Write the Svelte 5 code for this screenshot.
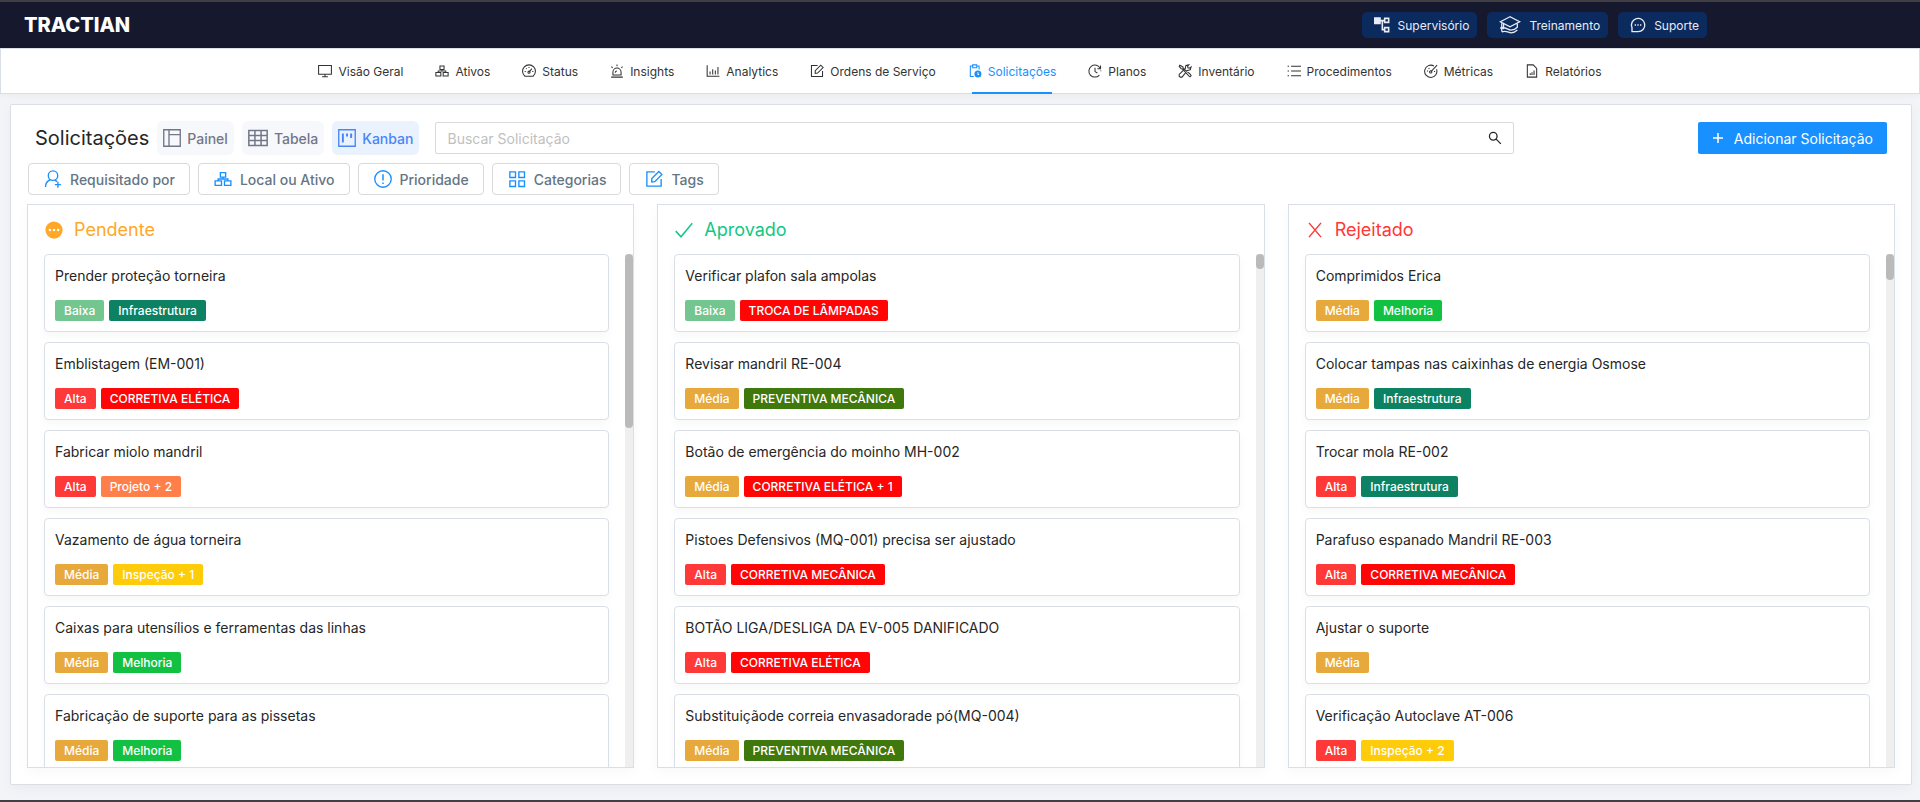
<script>
  const shortcuts = [
    { icon: 'tree', label: 'Supervisório', size: 16, stroke: 2.4 },
    { icon: 'school', label: 'Treinamento', size: 22, stroke: 1.4 },
    { icon: 'chat', label: 'Suporte', size: 16, stroke: 2 },
  ];

  const menu = [
    { icon: 'monitor', label: 'Visão Geral' },
    { icon: 'assets', label: 'Ativos' },
    { icon: 'gauge', label: 'Status' },
    { icon: 'siren', label: 'Insights' },
    { icon: 'chart', label: 'Analytics' },
    { icon: 'edit', label: 'Ordens de Serviço' },
    { icon: 'clipboard', label: 'Solicitações' },
    { icon: 'history', label: 'Planos' },
    { icon: 'tools', label: 'Inventário' },
    { icon: 'list', label: 'Procedimentos' },
    { icon: 'metrics', label: 'Métricas' },
    { icon: 'report', label: 'Relatórios' },
  ];

  const views = [
    { icon: 'panel', label: 'Painel', size: 18 },
    { icon: 'table', label: 'Tabela', size: 20 },
    { icon: 'kanban', label: 'Kanban', size: 18 },
  ];

  const filters = [
    { icon: 'userAdd', label: 'Requisitado por' },
    { icon: 'assets', label: 'Local ou Ativo' },
    { icon: 'alert', label: 'Prioridade' },
    { icon: 'grid', label: 'Categorias' },
    { icon: 'edit', label: 'Tags' },
  ];

  const tagColors = {
    'Baixa': '#73c68f',
    'Média': '#e8a93c',
    'Alta': '#ff3838',
    'Infraestrutura': '#0d8262',
    'Melhoria': '#13c142',
    'CORRETIVA ELÉTICA': '#ff0505',
    'CORRETIVA ELÉTICA + 1': '#ff0505',
    'CORRETIVA MECÂNICA': '#ff0505',
    'TROCA DE LÂMPADAS': '#ff0505',
    'PREVENTIVA MECÂNICA': '#3f780c',
    'Projeto + 2': '#ff7f4a',
    'Inspeção + 1': '#ffcc0a',
    'Inspeção + 2': '#ffcc0a',
  };

  const columns = [
    {
      title: 'Pendente',
      icon: 'pending',
      color: '#ffa726',
      thumb: 34,
      cards: [
        { title: 'Prender proteção torneira', tags: ['Baixa', 'Infraestrutura'] },
        { title: 'Emblistagem (EM-001)', tags: ['Alta', 'CORRETIVA ELÉTICA'] },
        { title: 'Fabricar miolo mandril', tags: ['Alta', 'Projeto + 2'] },
        { title: 'Vazamento de água torneira', tags: ['Média', 'Inspeção + 1'] },
        { title: 'Caixas para utensílios e ferramentas das linhas', tags: ['Média', 'Melhoria'] },
        { title: 'Fabricação de suporte para as pissetas', tags: ['Média', 'Melhoria'] },
      ],
    },
    {
      title: 'Aprovado',
      icon: 'check',
      color: '#0fc885',
      thumb: 3,
      cards: [
        { title: 'Verificar plafon sala ampolas', tags: ['Baixa', 'TROCA DE LÂMPADAS'] },
        { title: 'Revisar mandril RE-004', tags: ['Média', 'PREVENTIVA MECÂNICA'] },
        { title: 'Botão de emergência do moinho MH-002', tags: ['Média', 'CORRETIVA ELÉTICA + 1'] },
        { title: 'Pistoes Defensivos (MQ-001) precisa ser ajustado', tags: ['Alta', 'CORRETIVA MECÂNICA'] },
        { title: 'BOTÃO LIGA/DESLIGA DA EV-005 DANIFICADO', tags: ['Alta', 'CORRETIVA ELÉTICA'] },
        { title: 'Substituiçãode correia envasadorade pó(MQ-004)', tags: ['Média', 'PREVENTIVA MECÂNICA'] },
      ],
    },
    {
      title: 'Rejeitado',
      icon: 'close',
      color: '#ff3838',
      thumb: 5,
      cards: [
        { title: 'Comprimidos Erica', tags: ['Média', 'Melhoria'] },
        { title: 'Colocar tampas nas caixinhas de energia Osmose', tags: ['Média', 'Infraestrutura'] },
        { title: 'Trocar mola RE-002', tags: ['Alta', 'Infraestrutura'] },
        { title: 'Parafuso espanado Mandril RE-003', tags: ['Alta', 'CORRETIVA MECÂNICA'] },
        { title: 'Ajustar o suporte', tags: ['Média'] },
        { title: 'Verificação Autoclave AT-006', tags: ['Alta', 'Inspeção + 2'] },
      ],
    },
  ];

  // all on a 24x24 grid
  const icons = {
    tree: '<path d="M1 1.500h8v8H1z" fill="currentColor"/><path d="M16 2h6v6h-6zM16 16h6v6h-6zM9 5.500h7M12.500 5.500V19H16"/>',
    school: '<path d="M12 3 1.500 8.500 12 14l10.500-5.500zM5 11v4c3 0 5 2.500 8 2.500 2 0 5-1 7-3v-4M3 19.500c4-2 7 .5 10 1 3 0 5-1 7-3M3 10v9M1.500 16l1.500-2 2 2.500"/>',
    chat: '<path d="M3 22h9a10 10 0 1 0-9-6z"/><path d="M7 12h2M11 12h2M15 12h2" stroke-width="2.400"/>',
    monitor: '<path d="M1 2.500h22v15H1zM12 17.500V22M7 22h10"/>',
    assets: '<path d="M8.500 3.500h7v6h-7zM1.500 14.500H10v6H1.500zM14 14.500h8.500v6H14zM12 9.500V12M5.500 14.500V12h13v2.500"/>',
    gauge: '<path d="M5 21a11 11 0 1 1 14 0zM12 14l5-6"/><circle cx="12" cy="14" r="1.800"/><path d="M4.500 13h2M7 7.500l1 1M12 5v2M17.500 13h2"/>',
    siren: '<path d="M2 22.500h20M5 19v-5a7 7 0 0 1 14 0v5zM9 15a3 3 0 0 1 3-3M12 1v3M2.500 4.500l2 2M21.500 4.500l-2 2"/>',
    chart: '<path d="M2 2v19h21M7 18v-5M11.500 18V9M16 18v-7M20.500 18V5"/>',
    edit: '<path d="M13 2.500H2.500v19h19V12M9 16v-4.500l9.500-9.500 4 4L13 15.500z"/>',
    clipboard: '<path d="M10 21.500H4v-18h4M15 3.500h4v6M8 1.500h7v5H8z"/><circle cx="17" cy="17" r="6" fill="currentColor" stroke="none"/><path d="M17 14v3.500l2 1" stroke="#fff"/>',
    history: '<path d="M19.500 19a10.300 10.300 0 1 1 1.500-11.500M21.500 2.500V8h-5.500M12 6.500V13l4 2.500M22 11v1.500"/>',
    tools: '<path d="M3 2 2 4l3.500 4 2 .5L18 20l2.500 2 2-2-2-3L9 7.500 8.500 5zM16 11l5-1 1.500-5-3 2-2.500-.5-.5-2.500 2-2.500-5 1-1 5L2 18v3l2 1.500h3z"/>',
    list: '<path d="M7 4h17M7 12h17M7 20h17M1 4h2.500M1 12h2.500M1 20h2.500"/>',
    metrics: '<path d="M17 3.500A10.500 10.500 0 1 0 21.500 9M22.500 2 12 13M5 12h2M8 7l1 1.500M17 13h2"/><circle cx="11.500" cy="13.500" r="2"/>',
    report: '<path d="M4 1.500h10l6 6v15H4zM9 19v-3M12 19v-5M15.500 19v-8"/>',
    panel: '<path d="M1 1h22v22H1zM8 1v22M8 7.500h15"/>',
    table: '<path d="M1 3h22v18H1zM1 9h22M1 15h22M8.300 3v18M15.700 3v18"/>',
    kanban: '<path d="M1 1h22v22H1z"/><path d="M6.500 6v12M12 6v4M17.500 6v6" stroke-width="2.600"/>',
    search: '<circle cx="9" cy="9" r="6.500"/><path d="m14 14 8 8"/>',
    plus: '<path d="M12 2v20M2 12h20"/>',
    userAdd: '<circle cx="12" cy="7.500" r="6.300"/><path d="M2 22.500c0-5 2.500-8 6.500-9.500M14.500 13.500l3 2M18.500 15.500v8M14.500 19.500h8"/>',
    alert: '<circle cx="12" cy="12" r="11"/><path d="M12 5.500v8.500M12 16.500v2" stroke-width="2"/>',
    grid: '<path d="M2.500 2.500H10V10H2.500zM14.500 2.500H22V10h-7.500zM2.500 14.500H10V22H2.500zM14.500 14.500H22V22h-7.500z"/>',
    pending: '<circle cx="12" cy="12" r="11.500" fill="currentColor" stroke="none"/><g fill="#fff" stroke="none"><circle cx="6.500" cy="12" r="1.700"/><circle cx="12" cy="12" r="1.700"/><circle cx="17.500" cy="12" r="1.700"/></g>',
    check: '<path d="M1 13.500 8 21 23 3"/>',
    close: '<path d="M4 2.500 20 21.500M20 2.500 4 21.500"/>',
  };

  let activeMenu = $state('Solicitações');
  let activeView = $state('Kanban');
  let search = $state('');
</script>

{#snippet icon(name, size, width = 1.5)}
  <svg
    width={size}
    height={size}
    viewBox="0 0 24 24"
    fill="none"
    stroke="currentColor"
    stroke-width={width}
    aria-hidden="true"
  >
    {@html icons[name]}
  </svg>
{/snippet}

<div class="page">
  <header class="topbar">
    <a class="logo" href="#home">TRACTIAN</a>
    <div class="shortcuts">
      {#each shortcuts as item}
        <button class="shortcut">
          {@render icon(item.icon, item.size, item.stroke)}
          {item.label}
        </button>
      {/each}
    </div>
  </header>

  <nav class="menu">
    {#each menu as item}
      <a
        href="#{item.icon}"
        class="menu-item"
        class:active={item.label === activeMenu}
        onclick={() => (activeMenu = item.label)}
      >
        {@render icon(item.icon, 14, 1.8)}
        {item.label}
      </a>
    {/each}
  </nav>

  <main class="panel">
    <div class="toolbar">
      <h1>Solicitações</h1>
      <div class="views">
        {#each views as view}
          <button
            class="view"
            class:active={view.label === activeView}
            onclick={() => (activeView = view.label)}
          >
            {@render icon(view.icon, view.size, 1.8)}
            {view.label}
          </button>
        {/each}
      </div>
      <label class="search">
        <input type="text" placeholder="Buscar Solicitação" aria-label="Buscar Solicitação" bind:value={search} />
        {@render icon('search', 14, 2.2)}
      </label>
      <button class="add">
        {@render icon('plus', 12, 3)}
        Adicionar Solicitação
      </button>
    </div>

    <div class="filters">
      {#each filters as filter}
        <button class="filter">
          {@render icon(filter.icon, 18, 1.8)}
          {filter.label}
        </button>
      {/each}
    </div>

    <div class="board">
      {#each columns as column}
        <section class="column">
          <h2 style="color: {column.color}">
            {@render icon(column.icon, 18, 2)}
            {column.title}
          </h2>
          <div class="column-body">
            <div class="cards">
              {#each column.cards as card}
                <article class="card">
                  <p>{card.title}</p>
                  <div class="tags">
                    {#each card.tags as tag}
                      <span class="tag" style="background: {tagColors[tag]}">{tag}</span>
                    {/each}
                  </div>
                </article>
              {/each}
            </div>
            <div class="track" aria-hidden="true">
              <div class="thumb" style="height: {column.thumb}%"></div>
            </div>
          </div>
        </section>
      {/each}
    </div>
  </main>
</div>

<style>
  :global(body) {
    background: #f2f4f8;
  }

  .page {
    box-sizing: border-box;
    height: 100vh;
    display: flex;
    flex-direction: column;
    border-top: 2px solid #3f3f43;
    border-bottom: 2px solid #3f3f43;
    font-family: Inter, "Liberation Sans", sans-serif;
    font-size: 14px;
    color: #262626;
  }

  .page :global(*) {
    box-sizing: border-box;
  }

  svg {
    flex: none;
  }

  button {
    font-family: inherit;
    border: none;
    cursor: pointer;
    display: flex;
    align-items: center;
    white-space: nowrap;
  }

  a {
    text-decoration: none;
  }

  .topbar {
    flex: none;
    height: 46px;
    display: flex;
    align-items: center;
    justify-content: space-between;
    padding: 0 213px 0 24px;
    background: #16182d;
  }

  .logo {
    font-size: 20px;
    font-weight: 800;
    color: #fff;
  }

  .shortcuts {
    display: flex;
    gap: 10px;
  }

  .shortcut {
    height: 26px;
    gap: 8px;
    padding: 0 8px 0 12px;
    border-radius: 5px;
    background: #0b2a5e;
    color: #e8ecf4;
    font-size: 12px;
  }

  .menu {
    flex: none;
    height: 46px;
    display: flex;
    justify-content: center;
    background: #fff;
    border: 1px solid #d9dfe5;
    box-shadow: 0 2px 8px rgba(0, 0, 0, 0.04);
  }

  .menu-item {
    position: relative;
    display: flex;
    align-items: center;
    gap: 6px;
    padding: 0 16px;
    font-size: 12px;
    color: #333;
    white-space: nowrap;
  }

  .menu-item.active {
    color: #1890ff;
  }

  .menu-item.active::after {
    content: '';
    position: absolute;
    left: 20px;
    right: 20px;
    bottom: -1px;
    height: 2px;
    background: #1890ff;
  }

  .panel {
    flex: 1;
    min-height: 0;
    display: flex;
    flex-direction: column;
    margin: 10px 8px 15px 10px;
    padding: 16px;
    background: #fff;
    border: 1px solid #d9dfe5;
    border-radius: 2px;
    box-shadow: 0 4px 12px rgba(0, 0, 0, 0.04);
  }

  .toolbar {
    flex: none;
    display: flex;
    align-items: center;
    padding: 0 8px;
  }

  h1 {
    margin: 0 8px 0 0;
    font-size: 20px;
    font-weight: 400;
    line-height: 34px;
  }

  .views {
    display: flex;
    gap: 8px;
  }

  .view {
    height: 34px;
    gap: 6px;
    padding: 0 6px;
    border-radius: 6px;
    background: #f7f8fc;
    color: #717786;
    font-size: 14px;
    font-weight: 500;
  }

  .view.active {
    background: #e9f2fd;
    color: #4a85f8;
  }

  .search {
    flex: 1;
    height: 32px;
    display: flex;
    align-items: center;
    margin: 0 184px 0 16px;
    padding: 0 11px;
    border: 1px solid #d9d9d9;
    border-radius: 2px;
  }

  .search input {
    flex: 1;
    min-width: 0;
    padding: 0;
    border: none;
    outline: none;
    background: none;
    font-family: inherit;
    font-size: 14px;
  }

  .search input::placeholder {
    color: #bfbfbf;
  }

  .add {
    height: 32px;
    gap: 10px;
    padding: 0 14px;
    border-radius: 2px;
    background: #1890ff;
    color: #fff;
    font-size: 14px;
  }

  .filters {
    flex: none;
    display: flex;
    gap: 8px;
    margin: 8px 0 9px;
    padding: 0 1px;
  }

  .filter {
    height: 32px;
    gap: 8px;
    padding: 0 14px 0 15px;
    border: 1px solid #d9d9d9;
    border-radius: 4px;
    background: #fff;
    color: #657585;
    font-size: 14px;
    font-weight: 500;
  }

  .filter :global(svg) {
    color: #1890ff;
  }

  .board {
    flex: 1;
    min-height: 0;
    display: grid;
    grid-template-columns: repeat(3, minmax(0, 1fr));
    gap: 23px;
  }

  .column {
    min-height: 0;
    display: flex;
    flex-direction: column;
    border: 1px solid #d9dfe5;
    box-shadow: 0 4px 12px rgba(0, 0, 0, 0.03);
  }

  h2 {
    flex: none;
    display: flex;
    align-items: center;
    gap: 11px;
    margin: 0;
    padding: 0 17px;
    font-size: 18px;
    font-weight: 400;
    line-height: 49px;
  }

  .column-body {
    flex: 1;
    min-height: 0;
    display: flex;
  }

  .cards {
    flex: 1;
    display: flex;
    flex-direction: column;
    gap: 10px;
    padding: 0 16px;
    overflow-y: auto;
    scrollbar-width: none;
  }

  .card {
    flex: none;
    padding: 10px;
    border: 1px solid #d9dfe5;
    border-radius: 4px;
    box-shadow: 0 4px 10px rgba(0, 0, 0, 0.03);
  }

  .card p {
    margin: 0 0 13px;
    line-height: 22px;
  }

  .tags {
    display: flex;
    gap: 5px;
  }

  .tag {
    padding: 0 9px;
    border-radius: 2px;
    color: #fff;
    font-size: 12px;
    font-weight: 500;
    line-height: 21px;
  }

  .track {
    flex: none;
    width: 8px;
    background: #efefef;
  }

  .thumb {
    border-radius: 4px;
    background: #bababa;
  }
</style>
